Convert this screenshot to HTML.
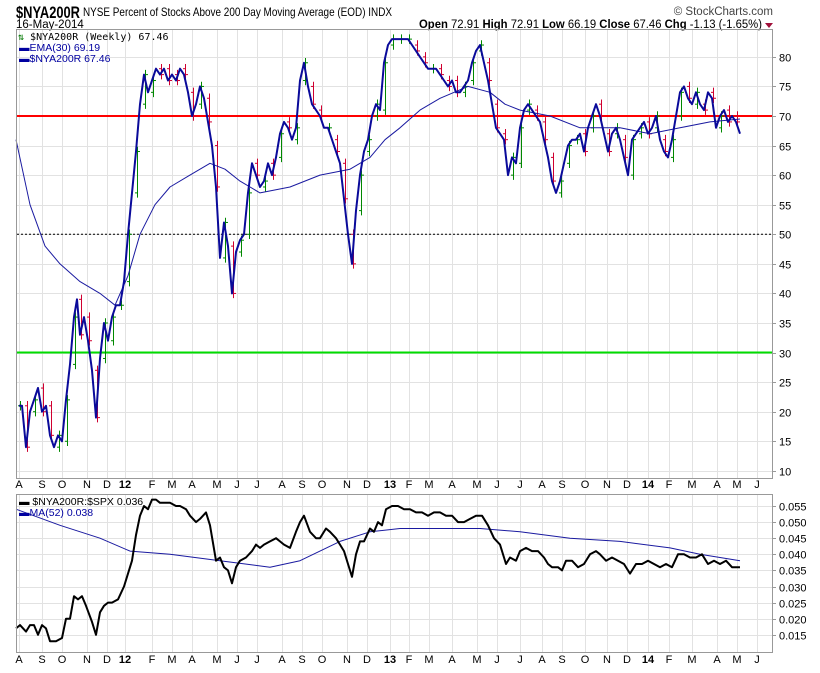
<!DOCTYPE html>
<html><head><meta charset="utf-8"><style>
body{margin:0;background:#fff;width:820px;height:668px;overflow:hidden;font-family:"Liberation Sans",sans-serif;}
</style></head><body>
<svg id="s" width="820" height="668" xmlns="http://www.w3.org/2000/svg" font-family="Liberation Sans, sans-serif">
<text x="16" y="18" font-size="17" font-weight="bold" fill="#000" textLength="64" lengthAdjust="spacingAndGlyphs">$NYA200R</text>
<text x="83" y="16" font-size="12" fill="#000" textLength="309" lengthAdjust="spacingAndGlyphs">NYSE Percent of Stocks Above 200 Day Moving Average (EOD) INDX</text>
<text x="16" y="28" font-size="11.5" fill="#000">16-May-2014</text>
<text x="773" y="15" font-size="11.5" fill="#444" text-anchor="end">© StockCharts.com</text>
<text x="419" y="28" font-size="11.5" fill="#000" textLength="343" lengthAdjust="spacingAndGlyphs"><tspan font-weight="bold">Open</tspan> 72.91 <tspan font-weight="bold">High</tspan> 72.91 <tspan font-weight="bold">Low</tspan> 66.19 <tspan font-weight="bold">Close</tspan> 67.46 <tspan font-weight="bold">Chg</tspan> -1.13 (-1.65%)</text>
<path d="M765 23l8 0l-4 5z" fill="#a0103a"/>
<g id="g"></g>
<rect x="16.5" y="29.5" width="756" height="449" fill="none" stroke="#999"/>
<rect x="16.5" y="494.5" width="756" height="158" fill="none" stroke="#999"/>
<text x="18" y="40" fill="#000" font-family="DejaVu Sans Mono, monospace" style="font-size:10px"><tspan fill="#070">⇅</tspan> $NYA200R (Weekly) 67.46</text>
<text x="19" y="51" font-size="10.5" fill="#0000a0">▬EMA(30) 69.19</text>
<text x="19" y="62" font-size="10.5" fill="#0000a0">▬$NYA200R 67.46</text>
<text x="19" y="505" font-size="10.5" fill="#000">▬ $NYA200R:$SPX 0.036</text>
<text x="19" y="516" font-size="10.5" fill="#0000a0">▬MA(52) 0.038</text>
</svg>
<script>
var NS="http://www.w3.org/2000/svg",g=document.getElementById("g");
function el(t,a){var e=document.createElementNS(NS,t);for(var k in a)e.setAttribute(k,a[k]);g.appendChild(e);return e;}
function tx(x,y,s,a,b){var e=el("text",{x:x,y:y,"font-size":11,fill:"#000","text-anchor":a||"middle"});if(b)e.setAttribute("font-weight","bold");e.textContent=s;}
var months=[[19,"A"],[42,"S"],[62,"O"],[87,"N"],[107,"D"],[125,"12",1],[152,"F"],[172,"M"],[192,"A"],[217,"M"],[237,"J"],[257,"J"],[282,"A"],[302,"S"],[322,"O"],[347,"N"],[367,"D"],[390,"13",1],[409,"F"],[429,"M"],[452,"A"],[477,"M"],[497,"J"],[520,"J"],[542,"A"],[562,"S"],[585,"O"],[607,"N"],[627,"D"],[648,"14",1],[669,"F"],[692,"M"],[717,"A"],[737,"M"],[757,"J"]];
months.forEach(function(m){var x=m[0]+0.5;
el("line",{x1:x,y1:30,x2:x,y2:478,stroke:"#e2e2e2"});el("line",{x1:x,y1:495,x2:x,y2:652,stroke:"#e2e2e2"});
tx(m[0],488,m[1],"middle",m[2]);tx(m[0],663,m[1],"middle",m[2]);});
function Y(v){return 116-(v-70)*5.914;}
for(var v=10;v<=80;v+=5){var y=Math.round(Y(v))+0.5;el("line",{x1:17,y1:y,x2:772,y2:y,stroke:"#e2e2e2"});el("line",{x1:772,y1:y,x2:776,y2:y,stroke:"#999"});tx(779,y+4,v,"start");}
function Y2(v){return 506+(0.055-v)/0.005*16.1;}
for(var i=15;i<=55;i+=5){var v=i/1000,y=Math.round(Y2(v))+0.5;el("line",{x1:17,y1:y,x2:772,y2:y,stroke:"#e2e2e2"});el("line",{x1:772,y1:y,x2:776,y2:y,stroke:"#999"});tx(779,y+4,"0.0"+i,"start");}
el("line",{x1:17,y1:Y(50),x2:772,y2:Y(50),stroke:"#000","stroke-dasharray":"2,2"});
el("line",{x1:17,y1:Y(70),x2:772,y2:Y(70),stroke:"#f00","stroke-width":2});
el("line",{x1:17,y1:Y(30),x2:772,y2:Y(30),stroke:"#0d0","stroke-width":2});
var p="19:21,22:21,26:14,30:20,34:22,38:24,42:20,46:21,50:16,54:14,58:16,62:15,66:22,70:28,74:36,77:39,80:33,84:36,88:32,92:27,96:19,100:29,104:35,108:32,112:36,116:38,120:38,124:42,128:50,132:57,136:64,140:72,144:77,148:74,152:76,156:78,160:77,164:78,168:76,172:77,176:76,180:78,184:77,188:74,192:70,196:72,200:75,204:73,208:69,212:65,216:58,220:46,224:52,228:48,232:40,236:47,240:49,244:50,248:57,252:62,256:60,260:58,264:59,268:62,272:60,276:63,280:67,284:69,288:68,292:66,296:68,300:76,304:79,308:75,312:72,316:71,320:70,324:68,328:68,332:66,336:64,340:62,344:56,348:50,352:45,356:54,360:60,364:64,368:66,372:70,376:72,380:71,384:79,388:82,392:83,396:83,400:83,404:83,408:83,412:82,416:81,420:80,424:79,428:78,432:78,436:78,440:77,444:76,448:75,452:76,456:74,460:74,464:75,468:76,472:79,476:81,480:82,484:79,488:76,492:72,496:68,500:67,504:66,508:60,512:63,516:62,520:68,524:71,528:72,532:71,536:70,540:69,544:66,548:63,552:59,556:57,560:59,564:62,568:65,572:66,576:66,580:67,584:64,588:68,592:70,596:72,600:70,604:67,608:64,612:67,616:68,620:66,624:63,628:60,632:66,636:67,640:68,644:69,648:67,652:68,656:70,660:66,664:64,668:63,672:66,676:70,680:74,684:75,688:73,692:72,696:74,700:72,704:71,708:74,712:73,716:68,720:70,724:71,728:69,732:70,736:69,740:67";
var pts=p.split(",").map(function(s){return s.split(":").map(Number);});
pts.forEach(function(q,i){if(i%2)return;var pv=i?pts[i-1][1]:q[1];var c=q[1]>=pv?"#080":"#d00030";var hi=Math.max(q[1],pv)+0.8,lo=Math.min(q[1],pv)-0.8;
el("line",{x1:q[0]+1.5,y1:Y(hi),x2:q[0]+1.5,y2:Y(lo),stroke:c});el("line",{x1:q[0]-1,y1:Y(pv),x2:q[0]+1,y2:Y(pv),stroke:c});el("line",{x1:q[0]+1,y1:Y(q[1]),x2:q[0]+4,y2:Y(q[1]),stroke:c});});
function poly(arr,f,st,w){el("polyline",{points:arr.map(function(q){return q[0]+","+f(q[1]).toFixed(1)}).join(" "),fill:"none",stroke:st,"stroke-width":w,"stroke-linejoin":"round"});}
var ema=[[16,66],[30,55],[45,48],[60,45],[80,42],[100,40],[115,38],[128,43],[140,50],[155,55],[170,58],[190,60],[210,62],[225,61],[240,59],[260,57],[290,58],[320,60],[350,61],[370,63],[385,66],[400,68],[420,71],[440,73],[468,75],[490,74],[505,72],[520,71],[550,70],[580,68],[620,68],[650,67],[680,68],[710,69],[740,69.5]];
poly(ema,Y,"#1a1aa0",1);
poly(pts,Y,"#0a0a9a",2);
var r="16:0.017,20:0.018,26:0.016,30:0.018,34:0.018,38:0.015,42:0.018,46:0.017,50:0.013,56:0.013,62:0.014,66:0.020,70:0.020,74:0.027,78:0.026,82:0.027,86:0.024,92:0.019,96:0.015,100:0.022,104:0.024,108:0.025,112:0.025,118:0.026,124:0.030,128:0.034,132:0.038,136:0.046,140:0.052,144:0.055,148:0.054,152:0.057,156:0.057,160:0.056,166:0.056,170:0.056,176:0.055,180:0.055,186:0.054,190:0.052,196:0.050,200:0.051,206:0.053,210:0.049,216:0.038,220:0.039,224:0.036,228:0.035,232:0.031,236:0.036,240:0.038,246:0.039,252:0.041,256:0.043,260:0.042,264:0.043,270:0.044,276:0.045,280:0.044,284:0.043,290:0.042,296:0.047,300:0.050,304:0.052,310:0.047,316:0.045,320:0.045,326:0.048,330:0.047,336:0.045,340:0.043,344:0.041,348:0.037,352:0.033,356:0.040,360:0.044,364:0.044,370:0.048,374:0.047,378:0.050,382:0.049,386:0.054,392:0.055,398:0.055,404:0.054,410:0.054,416:0.053,422:0.053,428:0.052,434:0.053,440:0.053,446:0.052,452:0.052,458:0.050,464:0.050,470:0.051,476:0.052,482:0.052,488:0.049,494:0.045,500:0.043,506:0.037,510:0.039,516:0.038,520:0.041,526:0.042,532:0.041,538:0.041,544:0.039,548:0.037,552:0.036,558:0.036,562:0.035,566:0.038,572:0.038,578:0.036,584:0.037,590:0.040,596:0.041,600:0.040,606:0.038,612:0.039,618:0.038,624:0.037,630:0.034,636:0.037,642:0.037,648:0.038,654:0.037,660:0.036,666:0.037,672:0.036,678:0.040,684:0.040,690:0.039,696:0.039,702:0.040,708:0.037,714:0.038,720:0.037,726:0.038,732:0.036,740:0.036";
var rp=r.split(",").map(function(s){return s.split(":").map(Number);});
var ma=[[16,0.054],[60,0.049],[100,0.045],[130,0.041],[170,0.040],[220,0.038],[270,0.036],[300,0.038],[340,0.044],[370,0.047],[400,0.048],[450,0.048],[480,0.048],[520,0.047],[570,0.045],[620,0.044],[670,0.042],[700,0.040],[740,0.038]];
poly(ma,Y2,"#1a1aa0",1);
poly(rp,Y2,"#000",2);
</script>
</body></html>
